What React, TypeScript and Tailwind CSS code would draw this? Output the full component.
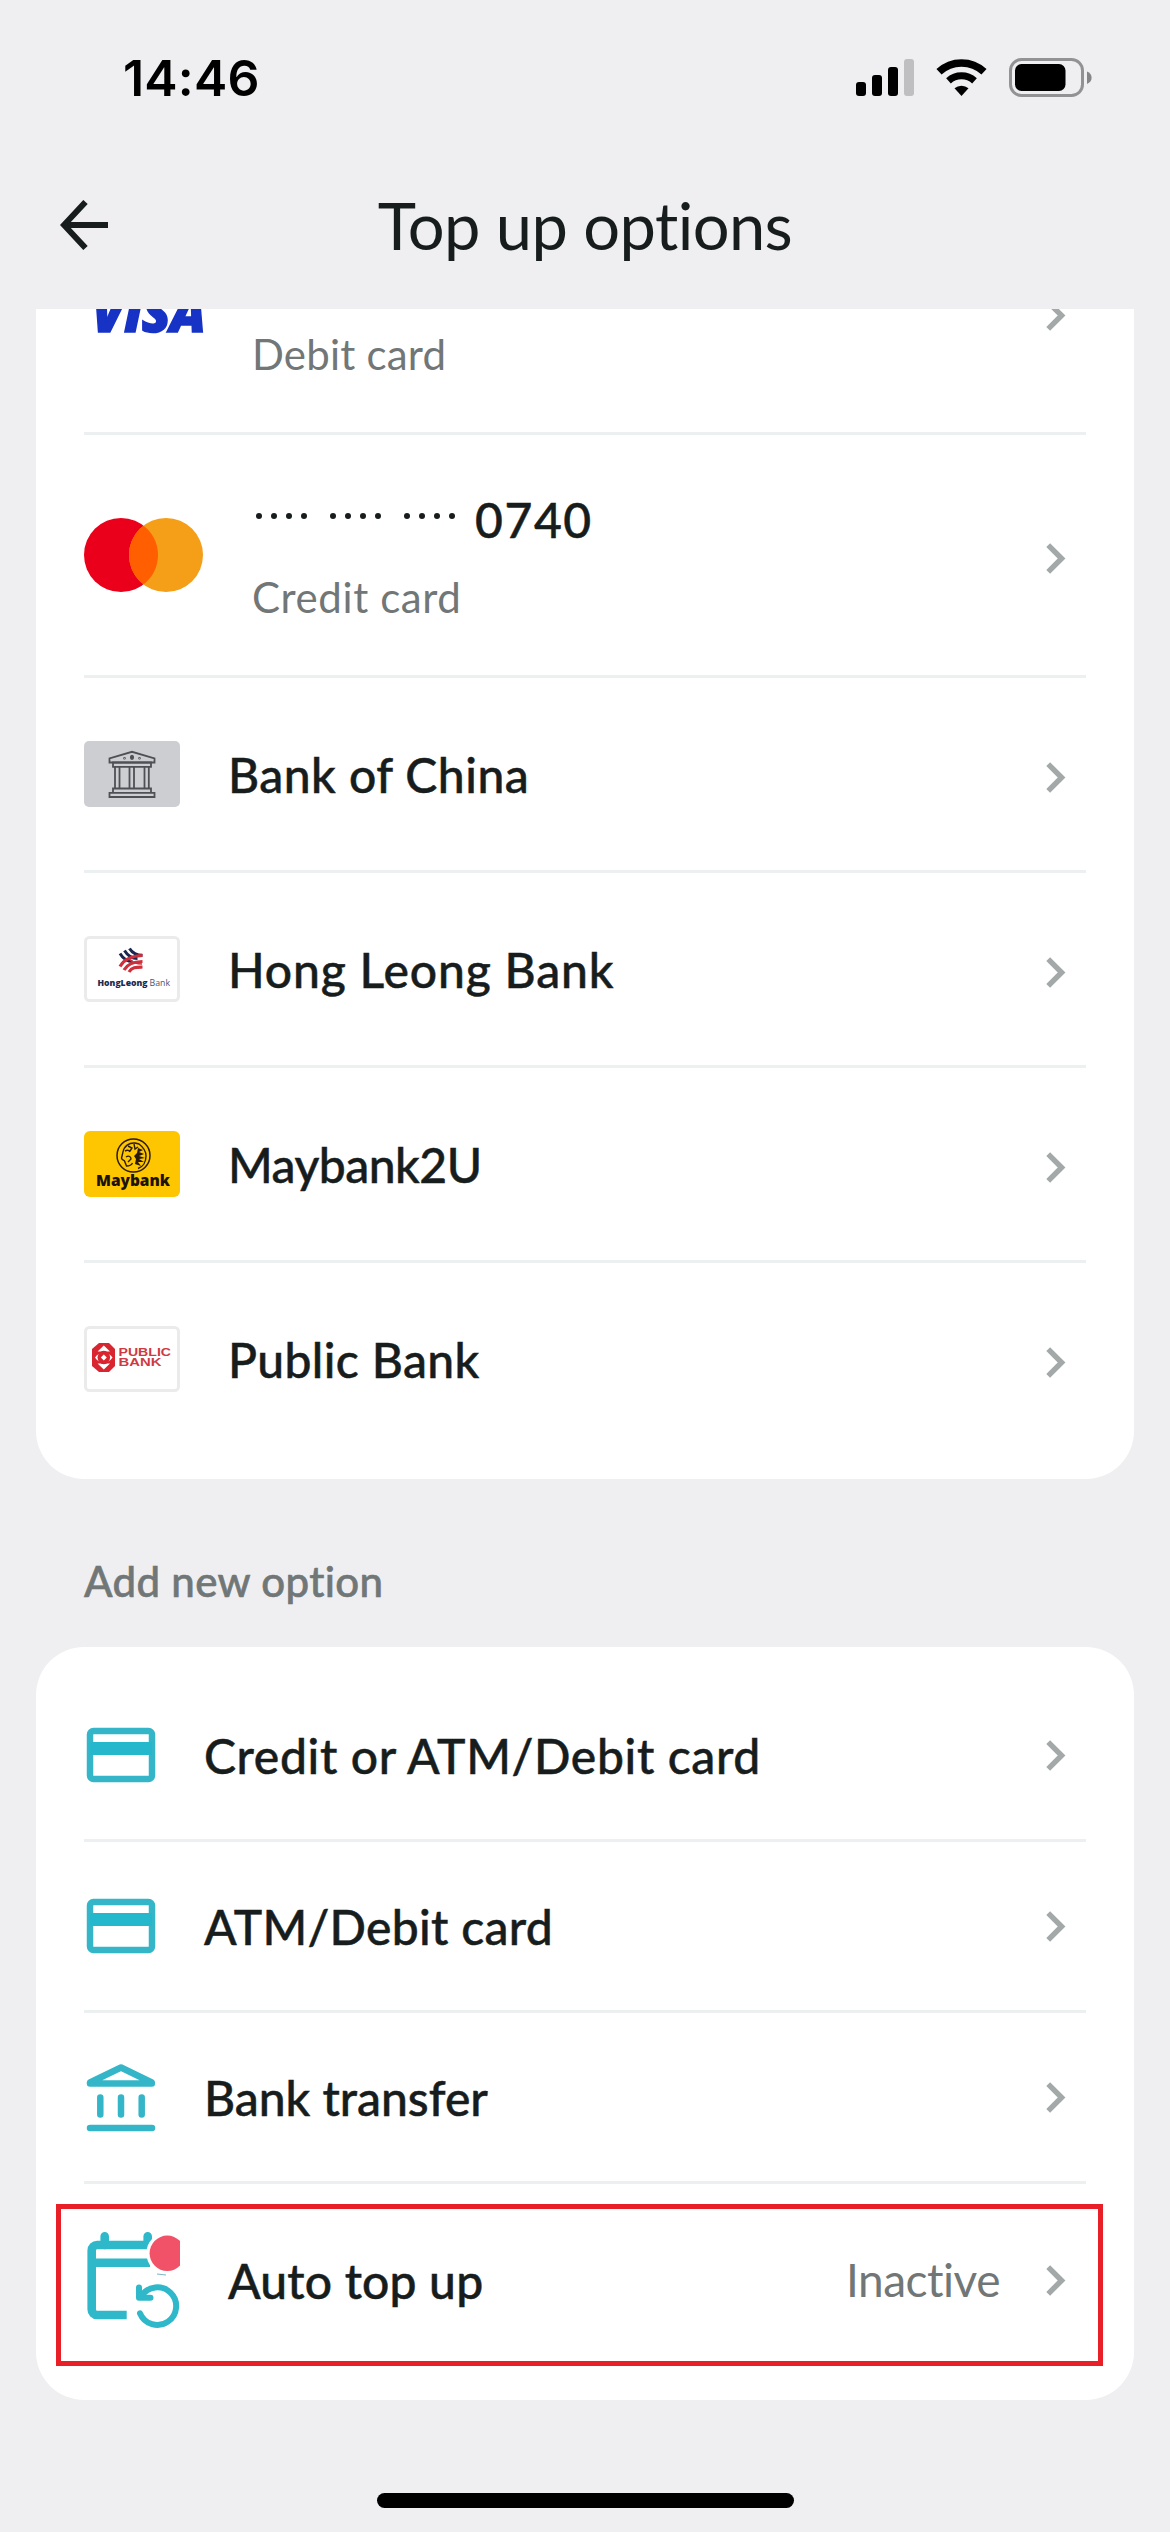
import React from 'react';

interface RowProps {
  icon: React.ReactNode;
  label: string;
  labelClass?: string;
  height: string;
  value?: string;
  chevronClass?: string;
  last?: boolean;
}

const ChevronIcon = ({ className = '' }: { className?: string }) => (
  <svg width="20" height="31" viewBox="0 0 20 31" fill="none" className={`shrink-0 ${className}`}>
    <path d="M2.2 2.2 15.6 15.5 2.2 28.8" stroke="#a3a8a8" strokeWidth="5.4" />
  </svg>
);

const StatusIcons = () => (
  <svg width="238" height="40" viewBox="855 58 238 40">
    <rect x="856" y="82" width="10" height="14" rx="3" />
    <rect x="872" y="75" width="10" height="21" rx="3" />
    <rect x="888" y="67" width="10" height="29" rx="3" />
    <rect x="904" y="59" width="10" height="37" rx="3" fill="#bfbfc1" />
    <path d="M961.500 96 954.500 88.300a11 11 0 0 1 14 0z" />
    <path d="M948.500 80.800a19.500 19.500 0 0 1 26 0" fill="none" stroke="#000" strokeWidth="7" />
    <path d="M939 71.800a33 33 0 0 1 45 0" fill="none" stroke="#000" strokeWidth="7.500" />
    <rect x="1010.500" y="59.500" width="72" height="36" rx="11" fill="none" stroke="#929294" strokeWidth="3" />
    <rect x="1015" y="64" width="50.500" height="27" rx="6.500" />
    <path d="M1087 71.500c3 1.300 4.600 3.400 4.600 6.200s-1.600 4.900-4.600 6.200z" fill="#858587" />
  </svg>
);

const MastercardLogo = () => (
  <svg width="120" height="76" viewBox="0 0 120 76">
    <circle cx="37" cy="38" r="37" fill="#eb001b" />
    <circle cx="82" cy="38" r="37" fill="#f59e18" />
    <path d="M59.500 8.630a37 37 0 0 1 0 58.740 37 37 0 0 1 0-58.740z" fill="#ff5f00" />
  </svg>
);

const ChinaTile = () => (
  <svg width="96" height="66" viewBox="0 0 96 66" fill="none" stroke="#4e5055" strokeWidth="1.800">
    <rect width="96" height="66" rx="5" fill="#cdced2" stroke="none" />
    <path d="M25.500 21.500v-4L48 10.800l22.500 6.700v4z" />
    <path d="M29 21.500h38v4.300H29zM31 25.800v21.500M35.500 25.800v21.500M45.500 25.800v21.500M50 25.800v21.500M60.500 25.800v21.500M64.800 25.800v21.500" />
    <path d="M29 47.500h38v4.300H29zM25.500 51.800h45V56h-45z" />
    <ellipse cx="48" cy="16.300" rx="1.200" ry="1.700" fill="#4e5055" />
    <circle cx="40.500" cy="17.300" r=".4" />
    <circle cx="55.500" cy="17.300" r=".4" />
  </svg>
);

const HongLeongTile = () => (
  <svg width="96" height="66" viewBox="0 0 96 66">
    <rect x="1.500" y="1.500" width="93" height="63" rx="4" fill="#fff" stroke="#ebebec" strokeWidth="3" />
    <g fill="none">
      <path d="M36 17.500c3 5 7 8 12.500 8M40.500 14.500c3 5 7 8 13 8M45.500 12.500c2.500 4 6 6.800 13 6.800" stroke="#1b2650" strokeWidth="3" />
      <path d="M58.500 19.500c-10 .3-18 3-22.500 11M58.500 25.500c-9 .2-15 2-18.500 8.500M58.500 31c-6 .2-10.500 0-13.500 5" stroke="#cf2f3b" strokeWidth="3.200" />
      <path d="M45 23c3 3 8 5 13 5" stroke="#cf2f3b" strokeWidth="1.500" />
    </g>
    <text x="13.500" y="50" textLength="50" lengthAdjust="spacingAndGlyphs" className="font-['Open_Sans'] text-[9px] font-extrabold" fill="#1b2b52">HongLeong</text>
    <text x="65.500" y="50" textLength="20.500" lengthAdjust="spacingAndGlyphs" className="font-['Open_Sans'] text-[9px]" fill="#4a5570">Bank</text>
  </svg>
);

const MaybankTile = () => (
  <svg width="96" height="66" viewBox="0 0 96 66">
    <rect width="96" height="66" rx="6" fill="#fdc600" />
    <circle cx="49.500" cy="24.500" r="16.500" fill="none" stroke="#2b1a08" strokeWidth="1.500" />
    <g fill="none" stroke="#2b1a08" strokeWidth="1.400">
      <path d="M39 21c1-6 6-9.500 12-9l4 1c4 3 7 7 7 12 0 6-3 11-8 12.500" />
      <path d="M39 21l-1.500 6c0 2 2 2 3 3l2 5c3 0 5-1 6-3" />
      <path d="M41 20c2-1 4-1 5 1M42 26c3-2 5 0 5 2l-3 3M44 15l4 2-2 3M50 13l1 5 3-2" />
    </g>
    <path d="M54 17l5 2-4 2 5 2-5 2 6 2-6 1 5 3-6 0 3 4-6-2 1-5-2-3 3-3z" fill="#2b1a08" />
    <text x="12" y="55" textLength="74" lengthAdjust="spacingAndGlyphs" className="font-['Open_Sans'] text-[16.500px] font-extrabold" fill="#1d1206">Maybank</text>
  </svg>
);

const PublicTile = () => (
  <svg width="96" height="66" viewBox="0 0 96 66">
    <rect x="1.500" y="1.500" width="93" height="63" rx="4" fill="#fff" stroke="#ebebec" strokeWidth="3" />
    <path d="M15 17h10l6 6v17l-6 6H15l-7-6V23z" fill="#d9252f" />
    <path d="M19.800 19.500 26 25.500h-3c-2-1-4.400-1-6.400 0h-3zM19.800 43.500 26 37.500h-3c-2 1-4.400 1-6.400 0h-3z" fill="#fff" />
    <path d="M11 31.500c4-6.500 13.500-6.500 17.500 0-4 6.500-13.500 6.500-17.500 0z" fill="#fff" />
    <circle cx="19.800" cy="31.500" r="6.300" fill="#d9252f" />
    <path d="M19.800 28.500l3 3-3 3-3-3z" fill="#fff" />
    <text x="34.500" y="29.800" textLength="52.500" lengthAdjust="spacingAndGlyphs" className="font-['Liberation_Sans'] text-[10px] font-bold" fill="#cf3a42">PUBLIC</text>
    <text x="34.500" y="40" textLength="43" lengthAdjust="spacingAndGlyphs" className="font-['Liberation_Sans'] text-[10px] font-bold" fill="#cf3a42">BANK</text>
  </svg>
);

const CardIcon = () => (
  <svg width="72" height="72" viewBox="0 0 72 72">
    <rect x="6" y="12" width="62" height="48" rx="3.500" fill="none" stroke="#35b6c8" strokeWidth="6.500" />
    <path d="M6 23h62v13H6z" fill="#25b8cd" />
  </svg>
);

const TransferIcon = () => (
  <svg width="72" height="72" viewBox="0 0 72 72" fill="none" stroke="#34b6c8" strokeWidth="6.500" strokeLinecap="round" strokeLinejoin="round">
    <path d="M6 21.500 37 6.500 67.800 21.500V22.500H6zM16.300 36.500v17M37 36.500v17M57.700 36.500v17M6 67h62" />
  </svg>
);

const AutoTopUpIcon = () => (
  <svg width="96" height="104" viewBox="0 0 96 104" fill="none" stroke="#2fb8ca" strokeWidth="8.600">
    <path d="M42.700 87H13.200a5.500 5.500 0 0 1-5.500-5.500V22.500a5.500 5.500 0 0 1 5.500-5.500H63M8 34.700h58" />
    <path d="M20.700 17V8.300M63.700 17V8.300" strokeLinecap="round" />
    <circle cx="83.300" cy="25.300" r="21" fill="#fff" stroke="none" />
    <path d="M73 46l9 1" stroke="#7fb4c4" strokeWidth="1.200" />
    <path d="M56 85.300A18.800 18.800 0 1 0 57.500 68" strokeWidth="6" strokeLinecap="round" />
    <path d="M55 59.500v10.300h11.500" strokeWidth="6" strokeLinecap="round" strokeLinejoin="round" />
    <circle cx="83.300" cy="25.300" r="17.700" fill="#f25268" stroke="none" />
  </svg>
);

const OptionRow: React.FC<RowProps> = ({ icon, label, labelClass = '', height, value, chevronClass, last }) => (
  <div className={`mx-12 flex shrink-0 items-center gap-12 pr-5 ${height} ${last ? '' : 'box-content border-b-[3px] border-[#edf0f0]'}`}>
    {icon}
    <span className={`flex-1 pt-px whitespace-nowrap text-[48px] leading-none font-medium text-[#171c1d] [-webkit-text-stroke:0.5px_#171c1d] ${labelClass}`}>{label}</span>
    {value && <span className="-mr-0.5 text-[46px] leading-none tracking-[-0.5px] text-[#717677]">{value}</span>}
    <ChevronIcon className={chevronClass} />
  </div>
);

const Dots = () => (
  <span className="mb-2 flex gap-[23px]">
    {[0, 1, 2].map(group => (
      <span key={group} className="flex gap-[9px]">
        {[0, 1, 2, 3].map(dot => (
          <span key={dot} className="size-[6px] rounded-full bg-[#171c1d]" />
        ))}
      </span>
    ))}
  </span>
);

export default function App() {
  return (
    <div className="flex h-[2532px] w-[1170px] flex-col overflow-hidden bg-[#efeff1] font-['Lato',sans-serif]">
      <div className="flex h-[156px] shrink-0 items-center justify-between pr-[77px] pl-[123px]">
        <span className="font-['Inter',sans-serif] text-[50px] leading-none font-semibold tracking-[0.2px] text-black">14:46</span>
        <StatusIcons />
      </div>
      <header className="mb-[15px] grid h-[138px] shrink-0 grid-cols-[1fr_auto_1fr] items-center px-[60px]">
        <svg width="48" height="50" viewBox="0 0 48 50" fill="none" stroke="#171c1d" strokeWidth="6">
          <path d="M48 25H4M25.500 2 4 25l21.500 23" />
        </svg>
        <h1 className="text-[65px] leading-none tracking-[-0.6px] text-[#171c1d]">Top up options</h1>
      </header>

      <section className="mx-9 flex h-[1170px] shrink-0 flex-col justify-end overflow-hidden rounded-b-[48px] bg-white pb-6">
        {/* first row is scrolled half way under the header */}
        <div className="mx-12 box-content flex h-[240px] shrink-0 items-center gap-12 border-b-[3px] border-[#edf0f0] pr-5">
          <span className="w-[120px] pb-0.5 pl-2 font-['Open_Sans'] text-[53px] leading-none font-extrabold tracking-[-0.8px] text-[#1733c6] italic [-webkit-text-stroke:1.5px_#1733c6]">VISA</span>
          <div className="flex flex-1 flex-col gap-8 pt-1">
            <div className="h-12" />
            <span className="text-[42px] leading-none tracking-[0.2px] text-[#717677]">Debit card</span>
          </div>
          <ChevronIcon className="mt-1.5" />
        </div>
        <div className="mx-12 box-content flex h-[240px] shrink-0 items-center gap-12 border-b-[3px] border-[#edf0f0] pr-5">
          <MastercardLogo />
          <div className="flex flex-1 flex-col gap-8 pt-1">
            <div className="flex h-12 items-center gap-5 pl-1">
              <Dots />
              <span className="text-[48px] leading-none font-medium tracking-[1.6px] text-[#171c1d] [-webkit-text-stroke:0.5px_#171c1d]">0740</span>
            </div>
            <span className="text-[42px] leading-none tracking-[0.6px] text-[#717677]">Credit card</span>
          </div>
          <ChevronIcon className="mt-1.5" />
        </div>
        <OptionRow icon={<ChinaTile />} label="Bank of China" labelClass="tracking-[0.5px]" height="h-48" chevronClass="mt-1.5" />
        <OptionRow icon={<HongLeongTile />} label="Hong Leong Bank" labelClass="tracking-[0.85px]" height="h-48" chevronClass="mt-1.5" />
        <OptionRow icon={<MaybankTile />} label="Maybank2U" labelClass="tracking-[-0.5px]" height="h-48" chevronClass="mt-1.5" />
        <OptionRow icon={<PublicTile />} label="Public Bank" labelClass="tracking-[0.4px]" height="h-48" chevronClass="mt-1.5" last />
      </section>

      <h2 className="flex h-[168px] shrink-0 items-center px-[84px] pt-9 text-[42px] leading-none font-medium tracking-[0.35px] text-[#717677] [-webkit-text-stroke:0.6px_#717677]">Add new option</h2>

      <section className="relative mx-9 flex h-[753px] shrink-0 flex-col rounded-[48px] bg-white pt-6">
        <OptionRow icon={<CardIcon />} label="Credit or ATM/Debit card" labelClass="tracking-[0.65px]" height="h-[168px]" />
        <OptionRow icon={<CardIcon />} label="ATM/Debit card" labelClass="tracking-[0.3px]" height="h-[168px]" />
        <OptionRow icon={<TransferIcon />} label="Bank transfer" height="h-[168px]" />
        <OptionRow icon={<AutoTopUpIcon />} label="Auto top up" labelClass="tracking-[0.2px]" height="h-48" value="Inactive" last />
        {/* highlight drawn over the last row */}
        <div className="absolute top-[557px] left-5 h-[162px] w-[1047px] border-5 border-[#e81f27]" />
      </section>

      <div className="mx-auto mt-[93px] h-[15px] w-[417px] shrink-0 rounded-full bg-black" />
    </div>
  );
}
